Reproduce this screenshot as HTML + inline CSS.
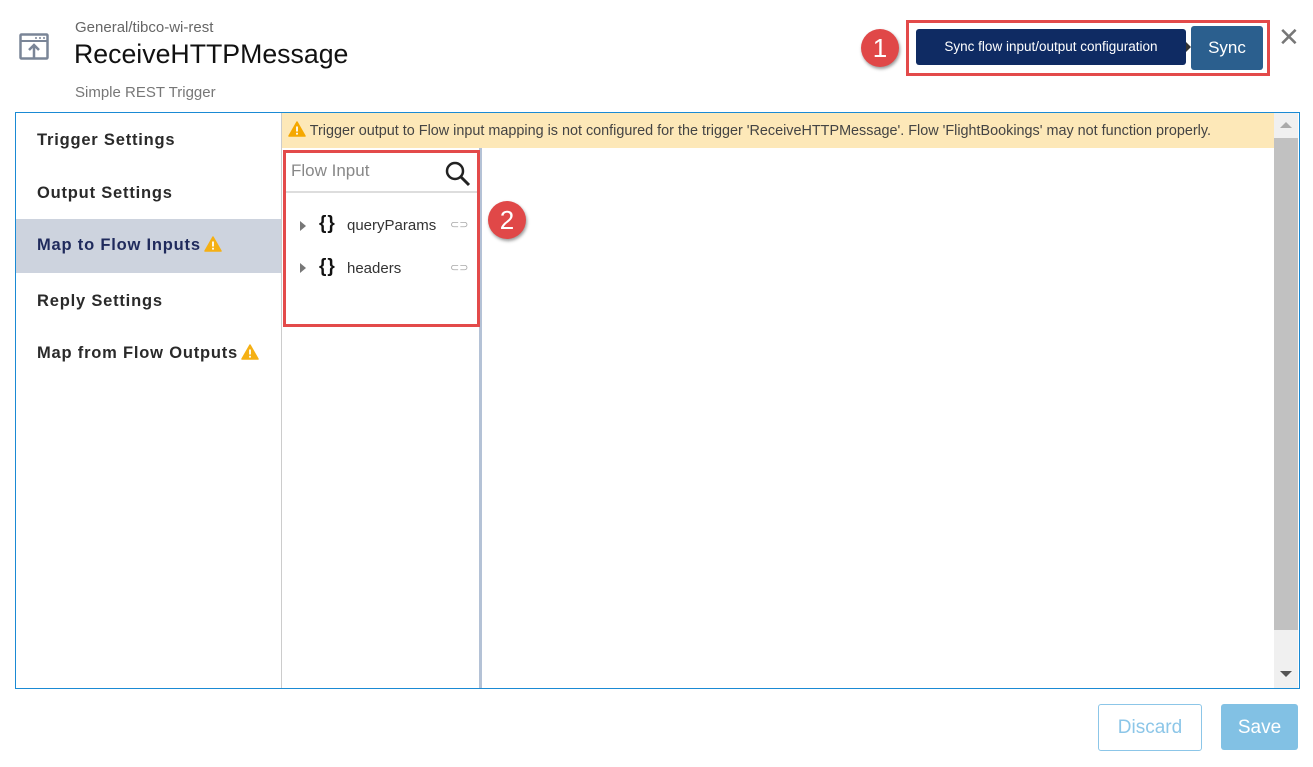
<!DOCTYPE html>
<html><head><style>
*{box-sizing:border-box;margin:0;padding:0}
body{width:1313px;height:767px;background:#fff;font-family:"Liberation Sans",sans-serif;position:relative;overflow:hidden;color:#333}
.a{position:absolute}
.nav{position:absolute;left:37px;font-size:16.5px;font-weight:bold;letter-spacing:0.8px;color:#2a2a2a}
.w{display:inline-block;vertical-align:-2px;margin-left:3px}
</style></head><body>
<svg class="a" style="left:19px;top:33px" width="30" height="27" viewBox="0 0 30 27"><rect x="1.5" y="1.5" width="27" height="24" rx="1" fill="none" stroke="#7a8597" stroke-width="2.5"/><line x1="1.5" y1="8" x2="28.5" y2="8" stroke="#7a8597" stroke-width="2"/><circle cx="17" cy="5" r="1" fill="#7a8597"/><circle cx="21" cy="5" r="1" fill="#7a8597"/><circle cx="25" cy="5" r="1" fill="#7a8597"/><path d="M15 25V13M10 17l5-5 5 5" fill="none" stroke="#7a8597" stroke-width="2.5"/></svg>
<div class="a" style="left:75px;top:19px;font-size:15px;color:#666">General/tibco-wi-rest</div>
<div class="a" style="left:74px;top:39px;font-size:26.7px;color:#111">ReceiveHTTPMessage</div>
<div class="a" style="left:75px;top:84px;font-size:15px;color:#777">Simple REST Trigger</div>

<div class="a" style="left:861px;top:29px;width:38px;height:38px;border-radius:50%;background:#e04848;box-shadow:1px 2px 3px #999;color:#fff;font-size:26px;text-align:center;line-height:38px">1</div>
<div class="a" style="left:906px;top:20px;width:364px;height:56px;border:3px solid #e34a4a"></div>
<div class="a" style="left:916px;top:29px;width:270px;height:36px;background:#0f2b63;border-radius:3px;color:#fff;font-size:13.5px;text-align:center;line-height:36px">Sync flow input/output configuration</div>
<div class="a" style="left:1186px;top:42px;width:0;height:0;border-top:5px solid transparent;border-bottom:5px solid transparent;border-left:5px solid #333"></div>
<div class="a" style="left:1191px;top:26px;width:72px;height:44px;background:#2b5f8e;border-radius:3px;color:#fff;font-size:17px;text-align:center;line-height:44px">Sync</div>
<div class="a" style="left:1278px;top:24px;font-size:26px;color:#777;line-height:26px">✕</div>

<div class="a" style="left:15px;top:112px;width:1285px;height:577px;border:1px solid #1a8ad4"></div>
<div class="a" style="left:281px;top:113px;width:1px;height:575px;background:#ccc"></div>
<div class="nav" style="top:131px">Trigger Settings</div>
<div class="nav" style="top:184px">Output Settings</div>
<div class="a" style="left:16px;top:219px;width:265px;height:54px;background:#cdd3de"></div>
<div class="nav" style="top:236px;color:#1f2a5c">Map to Flow Inputs<svg class="w" width="18" height="16" viewBox="0 0 18 16"><path d="M9 1L17 15H1Z" fill="#f5b014" stroke="#f5b014" stroke-linejoin="round" stroke-width="1.5"/><rect x="8.1" y="5.5" width="1.8" height="5" fill="#fff"/><rect x="8.1" y="11.8" width="1.8" height="1.8" fill="#fff"/></svg></div>
<div class="nav" style="top:292px">Reply Settings</div>
<div class="nav" style="top:344px">Map from Flow Outputs<svg class="w" width="18" height="16" viewBox="0 0 18 16"><path d="M9 1L17 15H1Z" fill="#f5b014" stroke="#f5b014" stroke-linejoin="round" stroke-width="1.5"/><rect x="8.1" y="5.5" width="1.8" height="5" fill="#fff"/><rect x="8.1" y="11.8" width="1.8" height="1.8" fill="#fff"/></svg></div>

<div class="a" style="left:282px;top:113px;width:992px;height:35px;background:#fde8b8;font-size:14.4px;color:#444;line-height:37px;padding-left:6px;white-space:nowrap"><svg style="vertical-align:-2px" width="18" height="16" viewBox="0 0 18 16"><path d="M9 1L17 15H1Z" fill="#f5a800" stroke="#f5a800" stroke-linejoin="round" stroke-width="1.5"/><rect x="8.1" y="5.5" width="1.8" height="5" fill="#fff"/><rect x="8.1" y="11.8" width="1.8" height="1.8" fill="#fff"/></svg> Trigger output to Flow input mapping is not configured for the trigger 'ReceiveHTTPMessage'. Flow 'FlightBookings' may not function properly.</div>
<div class="a" style="left:1274px;top:113px;width:24px;height:575px;background:#f0f0f0"></div>
<div class="a" style="left:1274px;top:138px;width:24px;height:492px;background:#c1c1c1"></div>
<div class="a" style="left:1280px;top:122px;border-left:6px solid transparent;border-right:6px solid transparent;border-bottom:6px solid #aaa"></div>
<div class="a" style="left:1280px;top:671px;border-left:6px solid transparent;border-right:6px solid transparent;border-top:6px solid #555"></div>

<div class="a" style="left:479px;top:148px;width:3px;height:540px;background:#b4c2d6"></div>
<div class="a" style="left:285px;top:191px;width:194px;height:2px;background:#ddd"></div>
<div class="a" style="left:291px;top:161px;font-size:17px;color:#888">Flow Input</div>
<svg class="a" style="left:444px;top:160px" width="28" height="28" viewBox="0 0 28 28"><circle cx="11" cy="11" r="8" fill="none" stroke="#222" stroke-width="2.5"/><line x1="17" y1="17" x2="25" y2="25" stroke="#222" stroke-width="3"/></svg>
<div class="a" style="left:300px;top:221px;border-top:5px solid transparent;border-bottom:5px solid transparent;border-left:6px solid #777"></div>
<div class="a" style="left:300px;top:263px;border-top:5px solid transparent;border-bottom:5px solid transparent;border-left:6px solid #777"></div>
<div class="a" style="left:319px;top:213px;font-size:19px;font-weight:bold;color:#111;letter-spacing:1px">{}</div>
<div class="a" style="left:319px;top:256px;font-size:19px;font-weight:bold;color:#111;letter-spacing:1px">{}</div>
<div class="a" style="left:347px;top:217px;font-size:15px;color:#333">queryParams</div>
<div class="a" style="left:347px;top:260px;font-size:15px;color:#333">headers</div>
<div class="a" style="left:450px;top:218px;font-size:11px;color:#aaa">⊂⊃</div>
<div class="a" style="left:450px;top:261px;font-size:11px;color:#aaa">⊂⊃</div>
<div class="a" style="left:283px;top:150px;width:197px;height:177px;border:3px solid #e34a4a"></div>
<div class="a" style="left:488px;top:201px;width:38px;height:38px;border-radius:50%;background:#e04848;box-shadow:1px 2px 3px #999;color:#fff;font-size:26px;text-align:center;line-height:38px">2</div>

<div class="a" style="left:1098px;top:704px;width:104px;height:47px;border:1px solid #8cc6e8;border-radius:3px;color:#8cc6e8;font-size:19px;text-align:center;line-height:45px">Discard</div>
<div class="a" style="left:1221px;top:704px;width:77px;height:46px;background:#82c1e4;border-radius:3px;color:#fff;font-size:19px;text-align:center;line-height:48px">Save</div>
</body></html>
